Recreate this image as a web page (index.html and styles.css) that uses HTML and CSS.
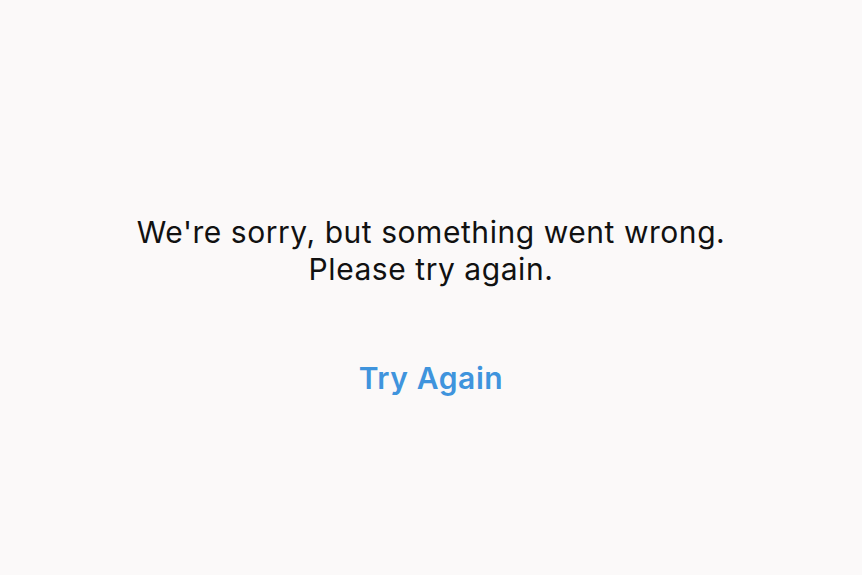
FILE: index.html
```html
<!DOCTYPE html>
<html>
<head>
    <title>Error</title>
    <link rel="stylesheet" href="styles.css">
</head>
<body>
    <div class="error">
        <p class="message">We're sorry, but something went wrong.<br>Please try again.</p>
        <button class="retry">Try Again</button>
    </div>
</body>
</html>
```

FILE: styles.css
```css
html, body {
    margin: 0;
    height: 100%;
    background-color: #fbf9f9;
}
body {
    display: flex;
    justify-content: center;
    align-items: center;
    font-family: Inter, "Liberation Sans", sans-serif;
}
.error {
    text-align: center;
    margin-top: 35px;
}
.message {
    margin: 0;
    font-size: 30px;
    line-height: 37px;
    letter-spacing: 0.55px;
    color: #111;
}
.retry {
    margin-top: 72px;
    font-family: inherit;
    font-size: 30px;
    font-weight: 600;
    letter-spacing: 0.6px;
    color: #3f94dd;
    background: none;
    border: none;
    padding: 0;
    cursor: pointer;
}
```
